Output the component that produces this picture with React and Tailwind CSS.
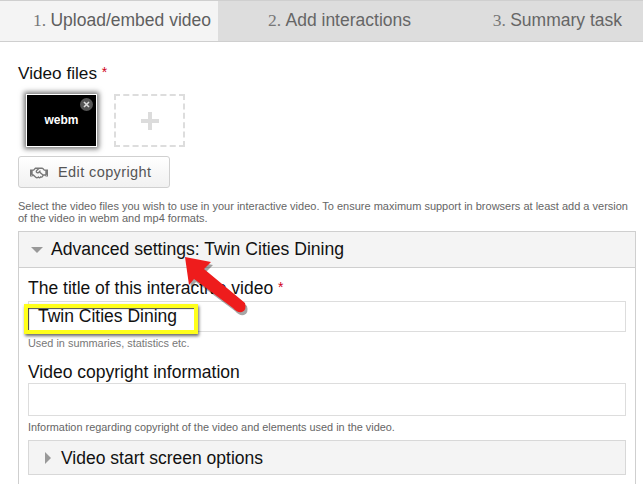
import { FaRegHandshake } from "react-icons/fa";

var SANS = "font-['Liberation_Sans',Arial,sans-serif]";

function Tab({ num, label, active, width }) {
  return (
    <div
      className={
        "h-full flex items-center justify-end border-r border-[#cfcfcf] last:border-r-0 " + width + " " +
        (active ? "bg-[#f4f4f4] text-[#5f5f5f]" : "bg-[#dddddd] text-[#666666]")
      }
    >
      <span className="text-[17.5px] whitespace-nowrap -mt-[2px]">
        <span className="font-['Liberation_Serif',serif] text-[#777777]">{num}. </span>{label}
      </span>
    </div>
  );
}

export default function App() {
  return (
    <div className={"relative w-[643px] h-[484px] overflow-hidden bg-white text-black " + SANS}>
      <div className="flex h-[42px] border-y border-[#cfcfcf]">
        <div className="w-[218px] flex"><Tab num="1" label="Upload/embed video" active width="w-full pr-[7px]" /></div>
        <div className="w-[218px] flex"><Tab num="2" label="Add interactions" width="w-full pr-[25px]" /></div>
        <div className="flex-1 flex"><Tab num="3" label="Summary task" width="w-full pr-[21px]" /></div>
      </div>

      <div className="pl-[18px] pr-[7px]">
        <div className="pt-[20px] h-[52px] text-[17.2px] leading-5 text-[#111111]">
          Video files <span className="text-[#d0021b] text-[14px] align-[2px]">*</span>
        </div>

        <div className="flex gap-[17px] pl-[8px]">
          <div className="relative w-[71px] h-[53px] bg-black border border-white shadow-[0_0_5px_2px_rgba(0,0,0,0.55)] flex items-center justify-center">
            <span className="text-white text-[12px] font-bold -mt-[1px]">webm</span>
            <span className="absolute top-[3px] right-[3px] w-[13px] h-[13px] rounded-full bg-[#555555] flex items-center justify-center">
              <svg width="7" height="7" viewBox="0 0 7 7">
                <path d="M1 1L6 6M6 1L1 6" stroke="#dddddd" strokeWidth="1.6" />
              </svg>
            </span>
          </div>
          <div className="w-[71px] h-[53px] border-2 border-dashed border-[#dddddd] flex items-center justify-center">
            <svg width="18" height="18" viewBox="0 0 18 18">
              <path d="M9 0V18M0 9H18" stroke="#dcdcdc" strokeWidth="4" />
            </svg>
          </div>
        </div>

        <button className="mt-[9px] w-[152px] h-[32px] flex items-center pt-[2px] border border-[#d0d0d0] rounded-[3px] bg-gradient-to-b from-white to-[#f1f1f1] text-[#555555] text-[14.5px] tracking-[0.4px]">
          <FaRegHandshake className="ml-[11px] mr-[10px] text-[#777777]" size={18} />
          Edit copyright
        </button>

        <p className="mt-[12px] max-w-[612px] text-[11px] leading-[12px] text-[#666666]">
          Select the video files you wish to use in your interactive video. To ensure maximum support in browsers at least add a version of the video in webm and mp4 formats.
        </p>

        <div className="mt-[7px] border border-[#cfcfcf] h-[260px]">
          <div className="h-[36px] bg-[#f4f4f4] border-b border-[#cfcfcf] flex items-center pl-[12px] text-[17.6px]">
            <span className="w-0 h-0 border-x-[6px] border-x-transparent border-t-[6px] border-t-[#999999] mr-[8px]" />
            <span className="text-[#111111] whitespace-nowrap">Advanced settings: Twin Cities Dining</span>
          </div>
          <div className="px-[9px]">
            <div className="pt-[8px] text-[17.5px] leading-[22px] text-[#111111]">
              The title of this interactive video <span className="text-[#d0021b] text-[14px] align-[2px]">*</span>
            </div>
            <div className="mt-[2px] h-[31px] border border-[#dddddd] pl-[9px] flex items-center text-[17.5px] text-[#111111]">
              Twin Cities Dining
            </div>
            <div className="mt-[5px] text-[10.9px] leading-[12px] text-[#777777]">Used in summaries, statistics etc.</div>
            <div className="mt-[12px] text-[17.5px] leading-[22px] text-[#111111]">Video copyright information</div>
            <div className="h-[33px] border border-[#dddddd]" />
            <div className="mt-[5px] text-[10.9px] leading-[12px] text-[#666666]">Information regarding copyright of the video and elements used in the video.</div>
            <div className="mt-[7px] h-[35px] pt-[1px] bg-[#f4f4f4] border border-[#d8d8d8] flex items-center pl-[16px] text-[17.5px]">
              <span className="w-0 h-0 border-y-[6px] border-y-transparent border-l-[6px] border-l-[#999999] mr-[10px]" />
              <span className="text-[#111111]">Video start screen options</span>
            </div>
          </div>
        </div>
      </div>

      {/* annotations pasted on top of the screenshot */}
      <div className="absolute left-[24px] top-[304px] w-[174px] h-[30px] border-[4px] border-[#ffff1a] shadow-[1px_2px_3px_rgba(0,0,0,0.6),inset_1px_1px_1px_rgba(0,0,0,0.7)] pointer-events-none" />
      <svg className="absolute left-[180px] top-[250px] pointer-events-none" width="75" height="70" viewBox="0 0 75 70">
        <path d="M5 7L31 12L24 19L65 53Q67 60 62 62Q57 63 53 58L14 29L9 35Z" fill="#000" opacity="0.35" transform="translate(2 3)" />
        <path d="M5 7L31 12L24 19L65 53Q67 60 62 62Q57 63 53 58L14 29L9 35Z" fill="#ee1c1c" />
      </svg>
    </div>
  );
}
